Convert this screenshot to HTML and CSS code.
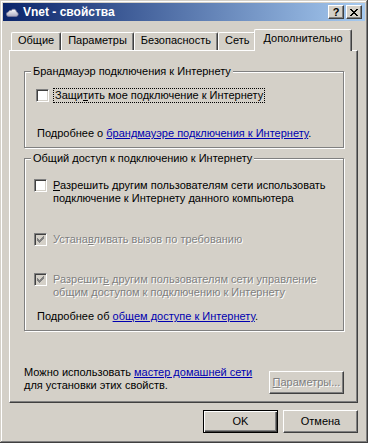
FILE: index.html
```html
<!DOCTYPE html>
<html lang="ru">
<head>
  <meta charset="UTF-8">
  <title>Vnet - свойства</title>
  <link rel="stylesheet" href="styles.css">
</head>
<body>
  <div class="window">
    <div class="titlebar">
      <svg class="title-icon" width="13" height="9" viewBox="0 0 13 9">
        <defs>
          <linearGradient id="cloud" x1="0" y1="0" x2="0" y2="1">
            <stop offset="0" stop-color="#ffffff"/>
            <stop offset="1" stop-color="#a8a8c0"/>
          </linearGradient>
        </defs>
        <path d="M3 8.5h7a2.3 2.3 0 0 0 .6-4.5 3 3 0 0 0-5.4-1.6A2.4 2.4 0 0 0 2.4 4 2.2 2.2 0 0 0 3 8.5z" fill="url(#cloud)" stroke="#7c7c9c" stroke-width="0.8"/>
      </svg>
      <span class="title-text">Vnet - свойства</span>
      <div class="title-buttons">
        <span class="tbtn tbtn-help">?</span>
        <span class="tbtn">
          <svg width="8" height="7" viewBox="0 0 8 7" shape-rendering="crispEdges">
            <path d="M0 0h2v1H0zM6 0h2v1H6zM1 1h2v1H1zM5 1h2v1H5zM2 2h4v1H2zM3 3h2v1H3zM2 4h4v1H2zM1 5h2v1H1zM5 5h2v1H5zM0 6h2v1H0zM6 6h2v1H6z" fill="#000"/>
          </svg>
        </span>
      </div>
    </div>

    <div class="client">
      <div class="tabs">
        <div class="tab">Общие</div>
        <div class="tab">Параметры</div>
        <div class="tab">Безопасность</div>
        <div class="tab">Сеть</div>
        <div class="tab active">Дополнительно</div>
      </div>

      <div class="panel">
        <fieldset class="group">
          <legend>Брандмауэр подключения к Интернету</legend>
          <div class="check-row row-firewall">
            <span class="check"></span>
            <span class="focus">Защи<u>т</u>ить мое подключение к Интернету</span>
          </div>
          <p class="more more-firewall">Подробнее о <a href="#">брандмауэре подключения к Интернету</a>.</p>
        </fieldset>

        <fieldset class="group group-sharing">
          <legend>Общий доступ к подключению к Интернету</legend>
          <div class="check-row row-share">
            <span class="check"></span>
            <span><u>Р</u>азрешить другим пользователям сети использовать<br>подключение к Интернету данного компьютера</span>
          </div>
          <div class="check-row row-dial disabled">
            <span class="check checked">
              <svg width="7" height="7" viewBox="0 0 7 7" shape-rendering="crispEdges"><path d="M6 0h1v1H6zM5 1h2v1H5zM0 2h1v1H0zM4 2h3v1H4zM0 3h2v1H0zM3 3h3v1H3zM0 4h5v1H0zM1 5h3v1H1zM2 6h1v1H2z" fill="#808080"/></svg>
            </span>
            <span>Устана<u>в</u>ливать вызов по требованию</span>
          </div>
          <div class="check-row row-manage disabled">
            <span class="check checked">
              <svg width="7" height="7" viewBox="0 0 7 7" shape-rendering="crispEdges"><path d="M6 0h1v1H6zM5 1h2v1H5zM0 2h1v1H0zM4 2h3v1H4zM0 3h2v1H0zM3 3h3v1H3zM0 4h5v1H0zM1 5h3v1H1zM2 6h1v1H2z" fill="#808080"/></svg>
            </span>
            <span>Разрешит<u>ь</u> другим пользователям сети управление<br>общим доступом к подключению к Интернету</span>
          </div>
          <p class="more more-sharing">Подробнее об <a href="#">общем доступе к Интернету</a>.</p>
        </fieldset>

        <div class="wizard-row">
          <p>Можно использовать <a href="#">мастер домашней сети</a><br>для установки этих свойств.</p>
          <span class="btn btn-disabled"><u>П</u>араметры...</span>
        </div>
      </div>

      <div class="dialog-buttons">
        <span class="btn btn-default">OK</span>
        <span class="btn">Отмена</span>
      </div>
    </div>
  </div>
</body>
</html>
```

FILE: styles.css
```css
* {
  box-sizing: border-box;
}
body {
  margin: 0;
  font-family: "Liberation Sans", Arial, sans-serif;
  font-size: 11px;
  line-height: 13px;
  color: #000;
  background: #d4d0c8;
}
.window {
  width: 368px;
  height: 443px;
  padding: 3px;
  background: #d4d0c8;
  box-shadow: inset -1px -1px #404040, inset 1px 1px #d4d0c8, inset -2px -2px #808080, inset 2px 2px #fff;
}
.titlebar {
  height: 18px;
  display: flex;
  align-items: center;
  padding: 0 3px;
  background: linear-gradient(to right, #0a246a, #a6caf0);
  color: #fff;
}
.title-icon {
  flex: none;
  margin-right: 4px;
}
.title-text {
  flex: 1;
  font-weight: bold;
  font-size: 12px;
}
.title-buttons {
  display: flex;
  gap: 2px;
}
.tbtn {
  width: 16px;
  height: 14px;
  display: flex;
  align-items: center;
  justify-content: center;
  background: #d4d0c8;
  color: #000;
  border: 1px solid;
  border-color: #fff #404040 #404040 #fff;
  box-shadow: inset -1px -1px #808080;
}
.tbtn-help {
  font-weight: bold;
  font-size: 11px;
}
.client {
  padding: 0 7px 0 6px;
}
.tabs {
  display: flex;
  align-items: flex-end;
  height: 21px;
  margin-top: 8px;
  padding-left: 2px;
}
.tab {
  height: 18px;
  padding: 1px 6px 0;
  background: #d4d0c8;
  border: 1px solid;
  border-color: #fff #404040 transparent #fff;
  border-bottom: 0;
  border-radius: 2px 2px 0 0;
  box-shadow: inset -1px 0 #808080;
  white-space: nowrap;
}
.tab.active {
  position: relative;
  z-index: 1;
  height: 22px;
  margin: 0 -2px -1px;
  padding: 2px 8px 0;
}
.panel {
  height: 353px;
  padding: 14px 13px 0 14px;
  border: 1px solid;
  border-color: #fff #404040 #404040 #fff;
  box-shadow: inset -1px -1px #808080;
}
.group {
  margin: 0;
  min-width: 0;
  padding: 0 12px 7px;
  border: 1px solid #808080;
  box-shadow: inset 1px 1px #fff, 1px 1px #fff;
}
.group legend {
  margin-left: -6px;
  padding: 0 2px;
  background: #d4d0c8;
}
.group-sharing {
  margin-top: 4px;
}
.check-row {
  display: flex;
  align-items: flex-start;
  gap: 4px;
}
.check {
  flex: none;
  width: 13px;
  height: 13px;
  margin-left: -1px;
  background: #fff;
  border: 1px solid;
  border-color: #808080 #fff #fff #808080;
  box-shadow: inset 1px 1px #404040, inset -1px -1px #d4d0c8;
}
.check svg {
  display: block;
  margin: 2px 0 0 2px;
}
.check.checked {
  background: #d4d0c8;
}
.group-sharing .check {
  margin-left: -3px;
  margin-right: 2px;
}
.disabled {
  color: #808080;
  text-shadow: 1px 1px #fff;
}
.focus {
  margin-top: -1px;
  padding: 0 1px;
  border: 1px dotted #000;
}
.row-firewall {
  margin-top: 11px;
}
.row-share {
  margin-top: 14px;
}
.row-dial {
  margin-top: 28px;
}
.row-manage {
  margin-top: 27px;
}
.more {
  margin: 0;
}
.more-firewall {
  margin-top: 24px;
}
.more-sharing {
  margin-top: 11px;
}
a {
  color: #0000b0;
}
.wizard-row {
  display: flex;
  justify-content: space-between;
  align-items: flex-start;
  margin-top: 35px;
}
.wizard-row p {
  margin: 0;
}
.btn {
  width: 75px;
  height: 23px;
  display: flex;
  align-items: center;
  justify-content: center;
  background: #d4d0c8;
  border: 1px solid;
  border-color: #fff #404040 #404040 #fff;
  box-shadow: inset -1px -1px #808080;
}
.wizard-row .btn {
  margin-top: 5px;
}
.btn-disabled {
  color: #808080;
  text-shadow: 1px 1px #fff;
}
.btn-default {
  border-color: #000;
  box-shadow: inset 1px 1px #fff, inset -1px -1px #404040, inset -2px -2px #808080;
}
.dialog-buttons {
  display: flex;
  justify-content: flex-end;
  gap: 5px;
  margin-top: 7px;
}
```
